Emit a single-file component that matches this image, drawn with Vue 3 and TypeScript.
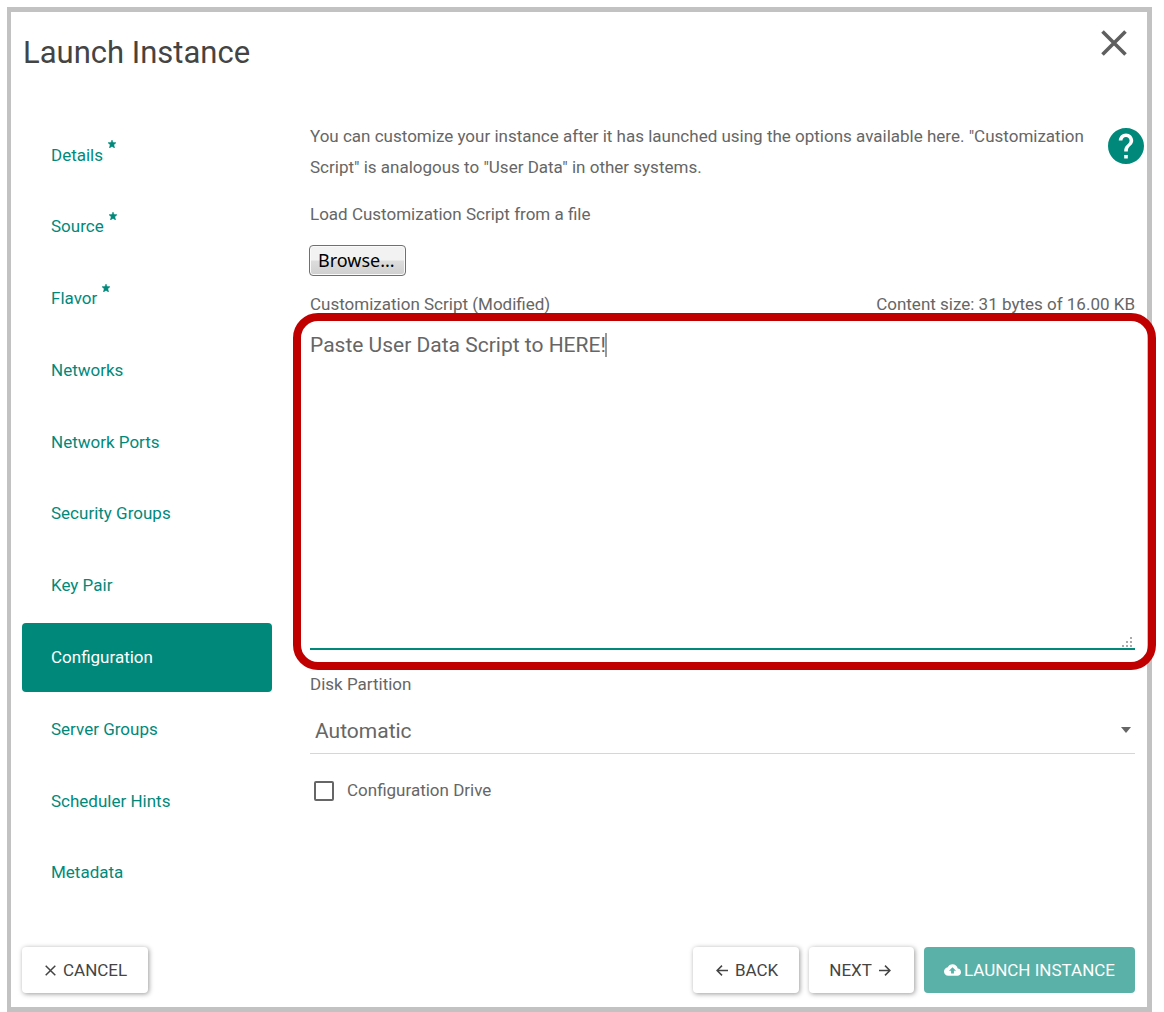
<script setup lang="ts">
import { ref } from 'vue'

interface Step {
  name: string
  required?: boolean
}

const steps: Step[] = [
  { name: 'Details', required: true },
  { name: 'Source', required: true },
  { name: 'Flavor', required: true },
  { name: 'Networks' },
  { name: 'Network Ports' },
  { name: 'Security Groups' },
  { name: 'Key Pair' },
  { name: 'Configuration' },
  { name: 'Server Groups' },
  { name: 'Scheduler Hints' },
  { name: 'Metadata' },
]

const active = ref('Configuration')
const script = ref('Paste User Data Script to HERE!')
const partition = ref('Automatic')
const configDrive = ref(false)
const fileInput = ref<HTMLInputElement | null>(null)
</script>

<template>
  <section class="dialog" role="dialog" aria-labelledby="dialog-title">
    <header class="header">
      <h1 id="dialog-title">Launch Instance</h1>
      <button class="close" type="button" aria-label="Close">
        <svg width="26" height="26" viewBox="0 0 26 26"><path d="M1.5 1.5l23 23M24.5 1.5l-23 23" stroke="#5f5f5f" stroke-width="3.6" /></svg>
      </button>
    </header>

    <div class="body">
      <nav class="steps">
        <a
          v-for="step in steps"
          :key="step.name"
          href="#"
          class="step"
          :class="{ active: step.name === active }"
          @click.prevent="active = step.name"
        >
          <span>{{ step.name }}</span>
          <svg v-if="step.required" class="star" width="8" height="8" viewBox="0 0 8 8"><path d="M4 0l1 2.4 3 .3-2.200 2 .8 3.200L4 6.400 1.400 7.900l.8-3.200L0 2.700l3-.3z" fill="#00897b" stroke="#00897b" stroke-width=".5" /></svg>
        </a>
      </nav>

      <main class="content">
        <p class="intro">
          You can customize your instance after it has launched using the options available here. "Customization
          Script" is analogous to "User Data" in other systems.
        </p>
        <button class="help" type="button" aria-label="Help">
          <svg width="36" height="36" viewBox="2 2 20 20"><path fill="#00897b" d="M12 2C6.480 2 2 6.480 2 12s4.480 10 10 10 10-4.480 10-10S17.520 2 12 2zm1 17h-2v-2h2v2zm2.070-7.750l-.9.920C13.450 12.900 13 13.500 13 15h-2v-.5c0-1.100.450-2.100 1.170-2.830l1.240-1.260c.370-.360.590-.860.590-1.410 0-1.100-.9-2-2-2s-2 .9-2 2H8c0-2.210 1.790-4 4-4s4 1.790 4 4c0 .880-.360 1.680-.930 2.250z" /></svg>
        </button>

        <label class="file-label" for="script-file">Load Customization Script from a file</label>
        <button class="browse" type="button" @click="fileInput?.click()">Browse...</button>
        <input id="script-file" ref="fileInput" type="file" hidden />

        <div class="script-head">
          <label for="script">Customization Script (Modified)</label>
          <span>Content size: 31 bytes of 16.00 KB</span>
        </div>
        <div class="script-box">
          <textarea id="script" v-model="script" spellcheck="false"></textarea>
          <span class="caret"></span>
          <svg class="grip" width="12" height="12" viewBox="0 0 12 12" fill="#aaa"><path d="M9 0h2v2H9zM5 4h2v2H5zM9 4h2v2H9zM1 8h2v2H1zM5 8h2v2H5zM9 8h2v2H9z" /></svg>
        </div>

        <label class="partition-label" for="partition">Disk Partition</label>
        <div class="select-box">
          <select id="partition" v-model="partition">
            <option>Automatic</option>
            <option>Manual</option>
          </select>
          <svg class="arrow" width="10" height="6" viewBox="0 0 10 6"><path d="M0 0h10L5 6z" fill="#666" /></svg>
        </div>

        <label class="check">
          <input v-model="configDrive" type="checkbox" />
          <span>Configuration Drive</span>
        </label>
      </main>
    </div>

    <footer class="footer">
      <button class="btn cancel" type="button">
        <svg width="11" height="11" viewBox="0 0 11 11"><path d="M.7.700l9.600 9.600M10.300.700L.7 10.300" stroke="#444" stroke-width="1.500" /></svg>
        CANCEL
      </button>
      <button class="btn" type="button">
        <svg width="12" height="11" viewBox="0 0 12 11"><path d="M12 5.500H1.200M6 .600L1.100 5.500 6 10.400" fill="none" stroke="#444" stroke-width="1.500" /></svg>
        BACK
      </button>
      <button class="btn next" type="button">
        NEXT
        <svg width="12" height="11" viewBox="0 0 12 11"><path d="M0 5.500h10.800M6 .600l4.900 4.900L6 10.400" fill="none" stroke="#444" stroke-width="1.500" /></svg>
      </button>
      <button class="btn launch" type="button">
        <svg width="17" height="12" viewBox="0 4 24 16"><path fill="#fff" d="M19.350 10.040C18.670 6.590 15.640 4 12 4 9.110 4 6.600 5.640 5.350 8.040 2.340 8.360 0 10.910 0 14c0 3.310 2.690 6 6 6h13c2.760 0 5-2.240 5-5 0-2.640-2.050-4.780-4.650-4.960zM14 13v4h-4v-4H7l5-5 5 5h-3z" /></svg>
        LAUNCH INSTANCE
      </button>
    </footer>
  </section>
</template>

<style>
body {
  background: #fff;
}
</style>

<style scoped>
* {
  box-sizing: border-box;
}

.dialog {
  margin: 7px 12px 0 7px;
  padding: 0 12px 14px 11px;
  border: 5px solid #c2c2c2;
  border-left-width: 4px;
  background: #fff;
  color: #666;
  font: 17px/31px Roboto, sans-serif;
}

button {
  padding: 0;
  border: 0;
  background: none;
  font: inherit;
  cursor: pointer;
}

svg {
  display: block;
  flex: none;
}

.header {
  display: flex;
  justify-content: space-between;
  align-items: flex-start;
  height: 108px;
  padding: 18px 8px 0 1px;
}

h1 {
  margin: 0;
  color: #444;
  font-size: 31px;
  font-weight: 400;
  line-height: 46px;
}

.body {
  display: flex;
  gap: 38px;
  min-height: 787px;
}

.steps {
  display: flex;
  flex: 0 0 250px;
  flex-direction: column;
  justify-content: space-between;
}

.step {
  display: flex;
  align-items: center;
  gap: 5px;
  height: 69px;
  padding: 1px 28px 0 29px;
  border-radius: 4px;
  color: #00897b;
  text-decoration: none;
}

.step.active {
  background: #00897b;
  color: #fff;
}

.star {
  margin-bottom: 22px;
}

.content {
  position: relative;
  display: flex;
  flex: 1;
  flex-direction: column;
  align-items: flex-start;
  min-width: 0;
  padding-top: 1px;
}

.intro {
  margin: 0 48px 16px 0;
}

.help {
  position: absolute;
  top: 8px;
  right: -9px;
}

.browse {
  width: 97px;
  height: 31px;
  margin: 15px 0 13px -1px;
  padding: 0 8px 2px;
  border: 1px solid #707070;
  border-radius: 4px;
  background: linear-gradient(#f2f2f2 0 48%, #dddddd 52%, #cfcfcf);
  box-shadow: inset 0 0 0 1px #fafafa;
  color: #000;
  font: 18px/24px "Noto Sans", sans-serif;
  text-align: left;
}

.script-head {
  display: flex;
  justify-content: space-between;
  align-self: stretch;
}

.script-box {
  position: relative;
  align-self: stretch;
  height: 330px;
}

.script-box::after {
  content: "";
  position: absolute;
  inset: -7px -21px -20px -17px;
  border: 8px solid #c00000;
  border-radius: 25px;
  pointer-events: none;
}

textarea {
  display: block;
  width: 100%;
  height: 100%;
  padding: 10px 0;
  border: 0;
  border-bottom: 2px solid #00897b;
  outline: 0;
  background: transparent;
  color: #666;
  font: 21px/31px Roboto, sans-serif;
  resize: none;
}

.caret {
  position: absolute;
  top: 13px;
  left: 295px;
  width: 2px;
  height: 24px;
  background: #999;
}

.grip {
  position: absolute;
  right: 2px;
  bottom: 1px;
}

.partition-label {
  margin-top: 19px;
}

.select-box {
  position: relative;
  align-self: stretch;
  margin-top: 8px;
}

select {
  display: block;
  width: 100%;
  height: 46px;
  padding: 2px 5px 0;
  border: 0;
  border-bottom: 1px solid #d6d6d6;
  background: transparent;
  color: #666;
  font: 21px/31px Roboto, sans-serif;
  appearance: none;
}

.arrow {
  position: absolute;
  top: 19px;
  right: 4px;
  pointer-events: none;
}

.check {
  display: flex;
  align-items: center;
  gap: 13px;
  margin: 21px 0 0 4px;
}

.check input {
  width: 20px;
  height: 20px;
  margin: 0;
  border: 2px solid #666;
  border-radius: 2px;
  appearance: none;
}

.check input:checked {
  border-color: #00897b;
  background: #00897b;
}

.footer {
  display: flex;
  gap: 10px;
  margin-top: 40px;
}

.btn {
  display: flex;
  align-items: center;
  gap: 7px;
  height: 46px;
  padding: 0 21px 0 23px;
  border-radius: 4px;
  background: #fff;
  box-shadow: 1px 1px 5px rgba(0, 0, 0, 0.4);
  color: #444;
  white-space: nowrap;
}

.cancel {
  margin-right: auto;
}

.next {
  padding: 0 23px 0 20px;
}

.launch {
  gap: 3px;
  padding: 0 20px;
  background: #59b1a8;
  box-shadow: none;
  color: #fff;
}
</style>
